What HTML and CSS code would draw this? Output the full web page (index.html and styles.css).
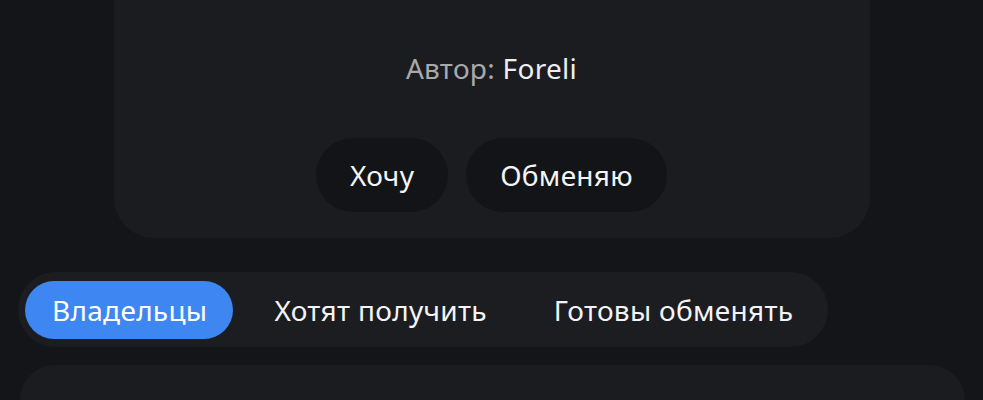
FILE: index.html
```html
<!DOCTYPE html>
<html lang="ru">
<head>
<meta charset="utf-8">
<title>Foreli</title>
<link rel="stylesheet" href="styles.css">
</head>
<body>
  <main class="page">
    <section class="item-card">
      <p class="author"><span class="author-label">Автор:</span> <span class="author-name">Foreli</span></p>
      <div class="actions">
        <button class="action">Хочу</button>
        <button class="action">Обменяю</button>
      </div>
    </section>

    <nav class="tabs">
      <button class="tab tab-active">Владельцы</button>
      <button class="tab">Хотят получить</button>
      <button class="tab">Готовы обменять</button>
    </nav>

    <section class="list-card"></section>
  </main>
</body>
</html>
```

FILE: styles.css
```css
* {
  box-sizing: border-box;
}

html, body {
  margin: 0;
  height: 100%;
  background: #141518;
  overflow: hidden;
}

body {
  font-family: "Noto Sans", "Open Sans", sans-serif;
  color: #f1f1f3;
  letter-spacing: 0.3px;
}

.page {
  display: flex;
  flex-direction: column;
}

/* Product card (top part scrolled off) */
.item-card {
  align-self: center;
  width: 756px;
  background: #1b1c20;
  border-radius: 0 0 40px 40px;
  padding: 48px 0 26px;
  display: flex;
  flex-direction: column;
  align-items: center;
}

.author {
  margin: 0;
  font-size: 28px;
  line-height: 40px;
}

.author-label {
  color: #a8a9ad;
}

.author-name {
  color: #eeeef0;
}

.actions {
  display: flex;
  gap: 18px;
  margin-top: 50px;
}

.action {
  height: 74px;
  padding: 0 34px;
  border: none;
  border-radius: 37px;
  background: #131417;
  color: #f4f4f6;
  font: inherit;
  font-size: 28px;
  letter-spacing: 0.3px;
}

/* Segmented tabs */
.tabs {
  align-self: flex-start;
  margin: 34px 0 0 18px;
  width: 810px;
  height: 75px;
  padding: 9px 7px;
  background: #1c1d21;
  border-radius: 38px;
  display: flex;
  align-items: center;
}

.tab {
  height: 58px;
  padding: 0 26px 0 27px;
  margin-right: 14px;
  border: none;
  border-radius: 29px;
  background: transparent;
  color: #f4f4f6;
  font: inherit;
  font-size: 28px;
  letter-spacing: 0.3px;
  white-space: nowrap;
}

.tab-active {
  background: #3e86f2;
  color: #ffffff;
}

.list-card {
  margin: 18px 18px 0 20px;
  height: 35px;
  background: #1b1c20;
  border-radius: 40px 40px 0 0;
}
```
